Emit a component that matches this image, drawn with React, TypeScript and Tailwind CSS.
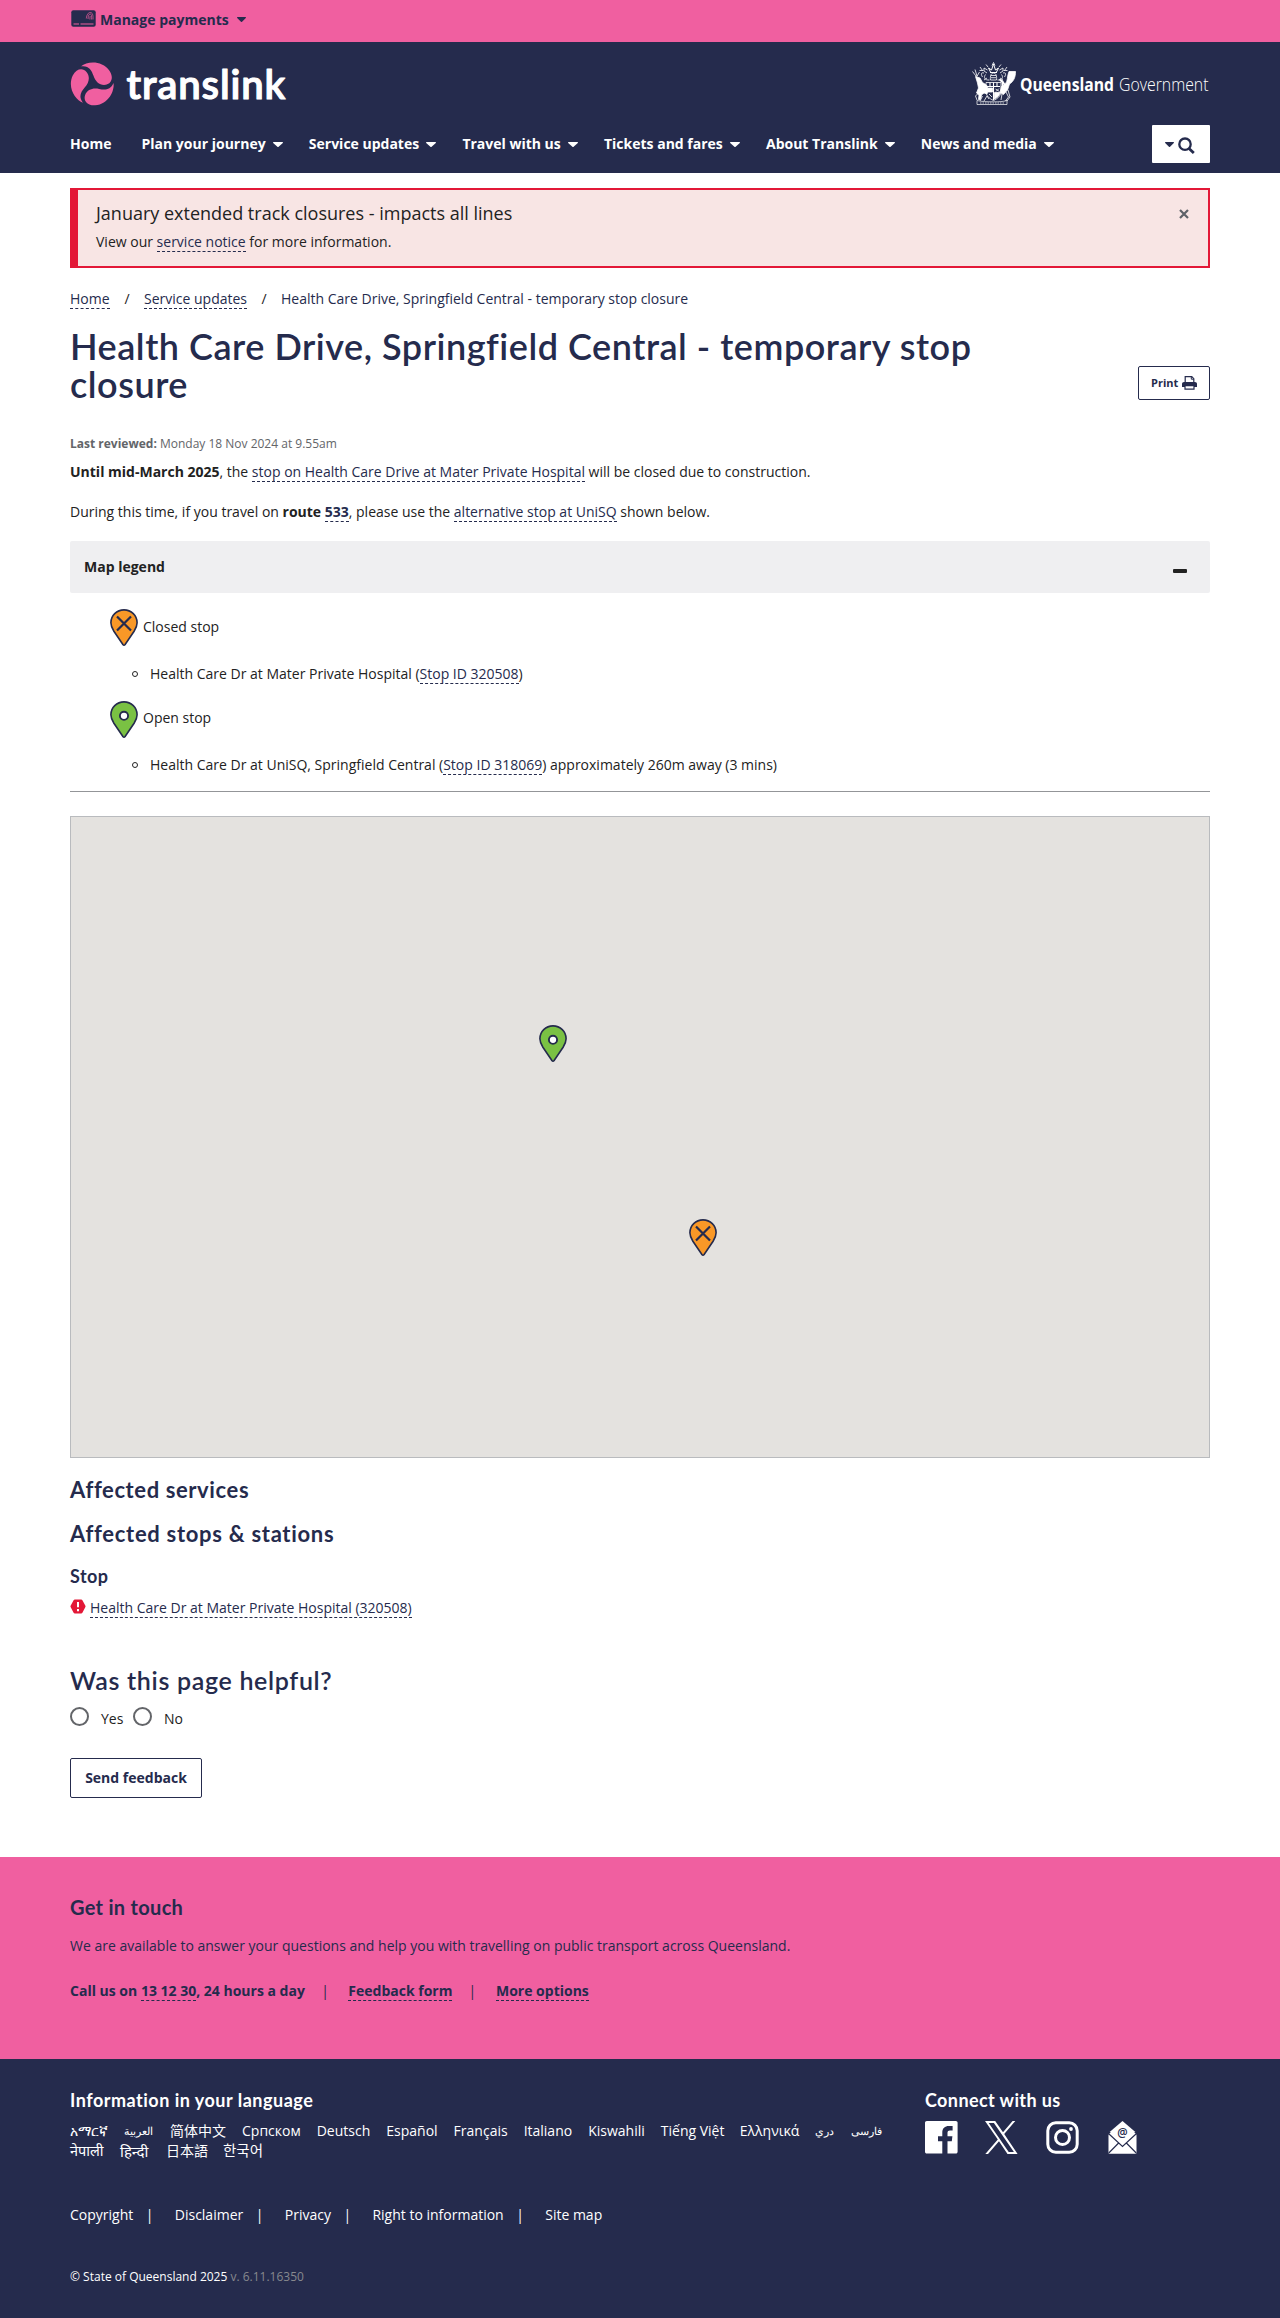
import type { ReactNode } from 'react';

const Caret = ({ className = '' }: { className?: string }) => (
  <svg viewBox="0 0 10 5" preserveAspectRatio="none" className={`shrink-0 ${className}`} fill="currentColor">
    <path d="M0.6 0h8.8c.5 0 .8.5.4.9L5.6 4.8a.9.9 0 0 1-1.2 0L.2.9C-.2.5.1 0 .6 0Z" />
  </svg>
);

const Link = ({ children }: { children: ReactNode }) => (
  <a href="#" className="border-b border-dashed border-[#252b4d] text-[#252b4d]">{children}</a>
);

const Pin = ({ kind }: { kind: 'open' | 'closed' }) => (
  <svg width="28" height="37" viewBox="0 0 28 37" className="block shrink-0">
    <path
      d="M14 .9C6.700 .9 .9 6.600 .9 13.800c0 3.100 1.200 5.600 3 8.400l9 13.300c.6.800 1.600.8 2.200 0l9-13.300c1.800-2.800 3-5.300 3-8.400C27.100 6.600 21.300.9 14 .9Z"
      fill={kind === 'open' ? '#7ac143' : '#f99827'}
      stroke="#252b4d"
      strokeWidth="1.600"
    />
    {kind === 'open' ? (
      <circle cx="14" cy="14.800" r="4.100" fill="#fff" stroke="#252b4d" strokeWidth="1.900" />
    ) : (
      <path d="M7 7.500 21 21.500M21 7.500 7 21.500" stroke="#252b4d" strokeWidth="2.200" />
    )}
  </svg>
);

const BLADE = 'M30 12C48-3 92-7 115 26C128 46 120 64 104 67C86 70 73 58 67 40C61 23 53 9 30 12Z';

const TranslinkLogo = () => (
  <svg width="218" height="46" viewBox="0 0 218 46" className="block">
    <g transform="translate(1 1.300) scale(.3359)" fill="#f05fa0">
      <path d={BLADE} />
      <path d={BLADE} transform="rotate(120 64 64.500)" />
      <path d={BLADE} transform="rotate(240 64 64.500)" />
    </g>
    <text
      x="56.500"
      y="37.800"
      textLength="159"
      lengthAdjust="spacing"
      fill="#fff"
      stroke="#fff"
      strokeWidth="1.100"
      strokeLinejoin="round"
      className="font-[Lato] text-[40px] font-semibold"
    >
      translink
    </text>
  </svg>
);

const QueenslandLogo = () => (
  <svg width="238" height="44" viewBox="0 0 238 44" className="block overflow-visible">
    <g fill="none" stroke="#fff" strokeWidth=".8">
      {/* deer and brolga supporters */}
      <path
        d="M3.500 14.500 8 16l2.500 4.500 4 2.500 2 5-1.500 4-3-1-2.500 2-1 4.500H6.500L7 33l-2.500-2 2-5-1-5Z"
        fill="#fff"
      />
      <path d="M.5 9.500 4 14M3 7.500 5 14M7.500 10 4.500 15M5 38l-1.500-4 3-3M12 39l3-5 2 3M8 39l2.500-5" />
      <path d="M37 9.500h6.500c0 6-2 10-6 12.500l-2 6-4 4.500-3.500-2 1.500-6 4-3c2.500-2.500 1.500-7.500 3.500-12Z" fill="#fff" />
      <path d="M34 30l2.500 5-3 4M36 28l2 7-3 4M30 32l-1 6" />
      <path d="M33.500 24l-3-5-3-1.500 3 3 0 5" strokeWidth="1.500" />
      {/* shield */}
      <path d="M14 20.500h15v8.500c0 4.500-3 7.500-7.500 9.500-4.500-2-7.500-5-7.500-9.500Z" />
      <path d="M15 24.500h13M18 20.500v4M21.500 20.500v4M25 20.500v4M21.500 24.500V38" strokeWidth="1.100" />
      <path d="M16 26h4.500v4H16ZM22.500 30.500H28c-.5 3-2 4.500-5.500 6.500Z" fill="#fff" />
      <path d="M23.500 27l4 2.500M24 29.500l3-3M17 32l3 3" />
      {/* helmet, mantling and sugar cane */}
      <path d="M18.500 18c-.5-4 .5-7 3-7s3.500 3 3 7ZM19 13.500h5M19 15.700h5" />
      <path d="M18 10.500h7M18.500 10l-2-4 3 2L21.500 2l2 6 3-2-2 4" strokeWidth="1" />
      <path d="M20 3.500l1.500-3 1.500 3M16 5l-2-2.500M27 5l2-2.500M15.500 8 12 6l0 3 3 2M27.500 8 31 6l0 3-3 2" />
      <path d="M17.500 18c-5 .5-6-3-4-5.500M10.500 15c-2-3-1-5 1.500-4M8 5l2.500 3.500M7.500 8.500l4 0M25.500 18c5 .5 6-3 4-5.500M32.500 15c2-3 1-5-1.500-4M35 5l-2.500 3.500M35.500 8.500l-4 0M12 18l3-2M31 18l-3-2" />
      {/* scroll */}
      <path d="M5 38.500c5 1.200 10 1.300 16.500 1.300s9-.1 13.500-1.300v4H5Z" strokeWidth=".7" />
      <path d="M8 41h25" strokeDasharray="1.500 1" strokeWidth=".7" />
    </g>
    <text
      x="48"
      y="29"
      textLength="94"
      lengthAdjust="spacingAndGlyphs"
      fill="#fff"
      className="font-['Open_Sans'] text-[18px] font-bold"
    >
      Queensland
    </text>
    <text
      x="147"
      y="29"
      textLength="89.500"
      lengthAdjust="spacingAndGlyphs"
      fill="#fff"
      className="font-['Open_Sans'] text-[18px] font-light"
    >
      Government
    </text>
  </svg>
);

const CardIcon = () => (
  <svg width="25" height="17" viewBox="0 0 25 17" className="block shrink-0">
    <rect x=".3" y=".2" width="24.400" height="16.600" rx="2" fill="#252b4d" />
    <g fill="none" stroke="#f05fa0">
      <path d="M2.500 14h5.500M9.500 14h13" strokeWidth="1" />
      <path d="M15.300 8.500c.5-4 2-6 4-6s3 2 2.700 7M17 9c.2-3.500 1-5 2.300-5 1.200 0 1.500 2 1.300 5.500M18.900 9.500c0-2 .2-3.500.5-3.500" strokeWidth=".7" />
    </g>
  </svg>
);

const NAV = ['Plan your journey', 'Service updates', 'Travel with us', 'Tickets and fares', 'About Translink', 'News and media'];

const Header = () => (
  <header className="font-bold">
    <div className="h-[42px] bg-[#f05fa0]">
      <div className="mx-auto flex w-[1140px] pt-[10px] text-[#252b4d]">
        <div className="ml-px">
          <CardIcon />
        </div>
        <span className="ml-1 leading-5">Manage payments</span>
        <Caret className="ml-[8px] mt-[7px] h-[5px] w-[9px]" />
      </div>
    </div>
    <div className="h-[131px] bg-[#252b4d] text-white">
      <div className="mx-auto w-[1140px]">
        <div className="flex justify-between pt-[19px]">
          <TranslinkLogo />
          <div className="mt-[1px]">
            <QueenslandLogo />
          </div>
        </div>
        <nav className="mt-[18px] flex">
          <a href="#" className="mt-[9px] w-[71.5px] leading-5">Home</a>
          {NAV.map((label) => (
            <a href="#" key={label} className="mr-[26.2px] mt-[9px] flex h-5 items-start whitespace-nowrap leading-5">
              {label}
              <Caret className="ml-[7px] mt-[8px] h-[5px] w-[10px]" />
            </a>
          ))}
          <button className="ml-auto flex h-[38px] w-[58px] justify-start rounded-[1px] bg-white text-[#252b4d]">
            <Caret className="ml-[13px] mt-[17px] h-[5px] w-[9px]" />
            <svg width="17" height="17" viewBox="0 0 17 17" className="ml-[4px] mt-[12px]" fill="none" stroke="currentColor">
              <circle cx="7" cy="7.200" r="5.700" strokeWidth="2.300" />
              <path d="M11 11.500l4.800 4.500" strokeWidth="2.800" />
            </svg>
          </button>
        </nav>
      </div>
    </div>
  </header>
);

const Bullet = () => (
  <span className="ml-[62px] mr-[12px] mt-[7px] h-[6px] w-[6px] rounded-full border border-[#222]" />
);

const Legend = () => (
  <section>
    <div className="mt-[19px] flex h-[52px] items-start justify-between rounded-[2px] bg-[#efeff1] pl-[14px] pr-[23px]">
      <h2 className="mt-4 font-bold leading-5">Map legend</h2>
      <span className="mt-[28px] h-[4px] w-[14px] rounded-[1px] bg-[#222]" />
    </div>
    <div className="mt-4 flex h-[37px] items-center gap-[5px] pl-10">
      <Pin kind="closed" />
      <span className="pb-[2px] leading-5">Closed stop</span>
    </div>
    <div className="mt-[18px] flex h-5 leading-5">
      <Bullet />
      <p>
        Health Care Dr at Mater Private Hospital (<Link>Stop ID 320508</Link>)
      </p>
    </div>
    <div className="mt-[17px] flex h-[37px] items-center gap-[5px] pl-10">
      <Pin kind="open" />
      <span className="pb-[3px] leading-5">Open stop</span>
    </div>
    <div className="mt-[17px] flex h-5 leading-5">
      <Bullet />
      <p>
        Health Care Dr at UniSQ, Springfield Central (<Link>Stop ID 318069</Link>) approximately 260m away (3 mins)
      </p>
    </div>
    <hr className="mt-4 border-t border-[#939598]" />
  </section>
);

const MapView = () => (
  <div className="relative mt-6 h-[642px] border border-[#b9bbbe] bg-[#e4e2df]">
    <div className="absolute left-[468px] top-[208px]">
      <Pin kind="open" />
    </div>
    <div className="absolute left-[618px] top-[402px]">
      <Pin kind="closed" />
    </div>
  </div>
);

const Main = () => (
  <main className="mx-auto w-[1140px]">
    <div className="mt-[15px] flex h-20 justify-between border-2 border-l-8 border-[#e31837] bg-[#f8e5e4] pl-[18px] pr-[19px]">
      <div>
        <h2 className="mt-[11px] text-[18px] leading-6">January extended track closures - impacts all lines</h2>
        <p className="mt-[7px] leading-5">
          View our <Link>service notice</Link> for more information.
        </p>
      </div>
      <svg width="10" height="10" viewBox="0 0 10 10" className="mt-[19px]" stroke="#5d6168" strokeWidth="2.200">
        <path d="M1 1l8 8M9 1 1 9" />
      </svg>
    </div>

    <nav className="mt-[21px] flex leading-5">
      <span className="h-5 w-10"><Link>Home</Link></span>
      <span className="w-[34px] text-center">/</span>
      <span><Link>Service updates</Link></span>
      <span className="w-[34px] text-center">/</span>
      <span className="text-[#252b4d]">Health Care Drive, Springfield Central - temporary stop closure</span>
    </nav>

    <div className="mt-[18px] flex items-end justify-between">
      <h1 className="w-[920px] font-[Lato] text-[36px] font-semibold leading-[38px] tracking-[0.530px] text-[#252b4d]">
        Health Care Drive, Springfield Central - temporary stop closure
      </h1>
      <button className="mb-[3px] flex h-[34px] w-[72px] items-start rounded-[2px] border border-[#252b4d] pl-[12px] pt-[7px] text-[11px] font-bold leading-[18px] text-[#252b4d]">
        Print
        <svg width="15" height="14" viewBox="0 0 15 14" className="ml-[4px] mt-[2px]" fill="none" stroke="currentColor">
          <path d="M3.200 6.500V.7h6.600l2 2v3.800" strokeWidth="1.200" />
          <path d="M9.300.7v2.500h2.500" strokeWidth="1" />
          <path d="M2 6h11c1 0 2 .8 2 1.800V11H0V7.800C0 6.800 1 6 2 6Z" fill="currentColor" stroke="none" />
          <path d="M3 9.700h9v3.500H3Z" fill="#fff" strokeWidth="1.200" />
        </svg>
      </button>
    </div>

    <p className="mt-[31px] text-[12px] leading-5 text-[#636569]">
      <b>Last reviewed:</b> Monday 18 Nov 2024 at 9.55am
    </p>
    <p className="mt-[8px] leading-5">
      <b>Until mid-March 2025</b>, the <Link>stop on Health Care Drive at Mater Private Hospital</Link> will be closed due to
      construction.
    </p>
    <p className="mt-5 leading-5">
      During this time, if you travel on <b>route <Link>533</Link></b>, please use the{' '}
      <Link>alternative stop at UniSQ</Link> shown below.
    </p>

    <Legend />
    <MapView />

    <div className="font-[Lato] font-bold text-[#252b4d]">
      <h2 className="mt-[18px] text-[22px] leading-7 tracking-[0.600px]">Affected services</h2>
      <h2 className="mt-4 text-[22px] leading-7 tracking-[0.700px]">Affected stops &amp; stations</h2>
      <h3 className="mt-4 text-[18px] leading-6 tracking-[0.450px]">Stop</h3>
    </div>
    <div className="mt-[10px] flex leading-5">
      <svg width="16" height="15" viewBox="0 0 16 15" className="mr-1 mt-px">
        <path d="M4.800.5h6.400c.5 0 .9.200 1.200.7l3 5.600c.2.400.2.900 0 1.300l-3 5.600c-.3.500-.7.700-1.200.7H4.800c-.5 0-.9-.2-1.200-.7l-3-5.600a1.400 1.400 0 0 1 0-1.300l3-5.600c.3-.5.7-.7 1.200-.7Z" fill="#e31837" />
        <path d="M8 3v5.200M8 10v2.200" stroke="#fff" strokeWidth="2" />
      </svg>
      <span><Link>Health Care Dr at Mater Private Hospital (320508)</Link></span>
    </div>

    <h2 className="mt-[46px] font-[Lato] text-[25px] font-semibold leading-8 tracking-[0.680px] text-[#252b4d]">Was this page helpful?</h2>
    <div className="mt-[11px] flex h-[22px] items-start leading-5">
      <span className="h-[19px] w-[19px] rounded-full border-2 border-[#636569]" />
      <label className="ml-[12px] mt-[2px] w-[32px]">Yes</label>
      <span className="h-[19px] w-[19px] rounded-full border-2 border-[#636569]" />
      <label className="ml-[12px] mt-[2px]">No</label>
    </div>
    <button className="mt-[29px] block h-10 w-[132px] rounded-[2px] border border-[#252b4d] pb-px font-bold leading-5 text-[#252b4d]">
      Send feedback
    </button>
  </main>
);

const ContactBand = () => (
  <section className="mt-[59px] h-[202px] bg-[#f05fa0] text-[#252b4d]">
    <div className="mx-auto w-[1140px] pt-[38px]">
      <h2 className="font-[Lato] text-[20px] font-bold leading-6 tracking-[0.300px]">Get in touch</h2>
      <p className="mt-[17px] leading-5">
        We are available to answer your questions and help you with travelling on public transport across Queensland.
      </p>
      <div className="mt-[25px] flex font-bold leading-5">
        <span>Call us on <Link>13 12 30</Link>, 24 hours a day</span>
        <span className="w-[43.5px] pr-[3px] text-center font-normal">|</span>
        <span><Link>Feedback form</Link></span>
        <span className="w-[43.5px] pr-[4px] text-center font-normal">|</span>
        <span><Link>More options</Link></span>
      </div>
    </div>
  </section>
);

const LANGUAGES = [
  ['አማርኛ', ''],
  ['العربية', 'w-[30px] text-[11px]'],
  ['简体中文', ''],
  ['Српском', ''],
  ['Deutsch', ''],
  ['Español', ''],
  ['Français', ''],
  ['Italiano', ''],
  ['Kiswahili', ''],
  ['Tiếng Việt', 'w-[63px]'],
  ['Ελληνικά', ''],
  ['دري', 'w-[20px] text-[11px]'],
  ['فارسی', 'w-[30px] text-[11px]'],
  ['नेपाली', 'w-[34px] text-[14.5px]'],
  ['हिन्दी', 'w-[30px] text-[15px]'],
  ['日本語', 'w-[41px]'],
  ['한국어', 'text-[14.5px]'],
];

const FOOTER_LINKS = ['Copyright', 'Disclaimer', 'Privacy', 'Right to information', 'Site map'];

const SocialIcons = () => (
  <div className="mt-[9px] flex items-start">
    <svg width="33" height="33" viewBox="0 0 33 33" fill="#fff">
      <path d="M1.800 0h29c1 0 1.800.8 1.800 1.800v29c0 1-.8 1.800-1.800 1.800h-8.300V20.200h4.300l.6-5h-4.900V12c0-1.400.4-2.400 2.500-2.400h2.600V5.100c-.5 0-2-.2-3.800-.2-3.900 0-6.500 2.300-6.500 6.600v3.700H13v5h4.300v12.400H1.800C.8 32.600 0 31.800 0 30.800v-29C0 .8.800 0 1.800 0Z" />
    </svg>
    <svg width="33" height="33" viewBox="0 0 33 33" className="ml-[27px]">
      <path fill="#fff" fillRule="evenodd" d="M0 0h10.200l7.800 11.200L27.600 0h2.700L19.200 13 32.600 33H22.500L14 20.300 3 33H.3L12.800 18.500Zm3.700 2 20 29h5.200L8.900 2Z" />
    </svg>
    <svg width="33" height="33" viewBox="0 0 33 33" className="ml-[28px]" fill="none" stroke="#fff" strokeWidth="3">
      <rect x="1.800" y="1.800" width="29.400" height="29.400" rx="8" />
      <circle cx="16.500" cy="16.500" r="7" />
      <circle cx="25" cy="8" r="1.900" fill="#fff" stroke="none" />
    </svg>
    <svg width="29" height="33" viewBox="0 0 30 33" preserveAspectRatio="none" className="ml-[29px]">
      <path d="M15 0l14.500 12v19.500c0 .8-.5 1.300-1.300 1.300H1.800c-.8 0-1.300-.5-1.300-1.300V12Z" fill="#fff" />
      <path d="M.5 12.500 15 25.500l14.500-13M.8 32 11 22M29.200 32 19 22" fill="none" stroke="#252b4d" strokeWidth="1.200" />
      <path d="M0 11h3L0 14ZM30 11h-3l3 3Z" fill="#252b4d" />
      <text x="15" y="16.500" textAnchor="middle" fill="#252b4d" className="font-['Open_Sans'] text-[12px] font-semibold">@</text>
    </svg>
  </div>
);

const Footer = () => (
  <footer className="h-[259px] bg-[#252b4d] text-white">
    <div className="mx-auto w-[1140px] pt-[29px]">
      <div className="flex">
        <div className="w-[855px]">
          <h2 className="font-[Lato] text-[18px] font-bold leading-6 tracking-[0.500px]">Information in your language</h2>
          <div className="mt-[9px] flex w-[830px] flex-wrap gap-x-4">
            {LANGUAGES.map(([name, style]) => (
              <a href="#" key={name} className={`h-5 whitespace-nowrap leading-5 ${style}`}>{name}</a>
            ))}
          </div>
        </div>
        <div>
          <h2 className="font-[Lato] text-[18px] font-bold leading-6 tracking-[0.400px]">Connect with us</h2>
          <SocialIcons />
        </div>
      </div>
      <div className="mt-[44px] flex leading-5">
        {FOOTER_LINKS.map((label, i) => (
          <span key={label} className="flex">
            <a href="#">{label}</a>
            {i < FOOTER_LINKS.length - 1 && <span className="ml-[12.5px] w-[29px]">|</span>}
          </span>
        ))}
      </div>
      <p className="mt-[42px] text-[12px] leading-5">
        © State of Queensland 2025 <span className="text-[#87898e]">v. 6.11.16350</span>
      </p>
    </div>
  </footer>
);

export default function App() {
  return (
    <div className="w-full overflow-hidden bg-white font-['Open_Sans','Noto_Sans','Noto_Sans_CJK_SC',sans-serif] text-[14px] text-[#222]">
      <Header />
      <Main />
      <ContactBand />
      <Footer />
    </div>
  );
}
